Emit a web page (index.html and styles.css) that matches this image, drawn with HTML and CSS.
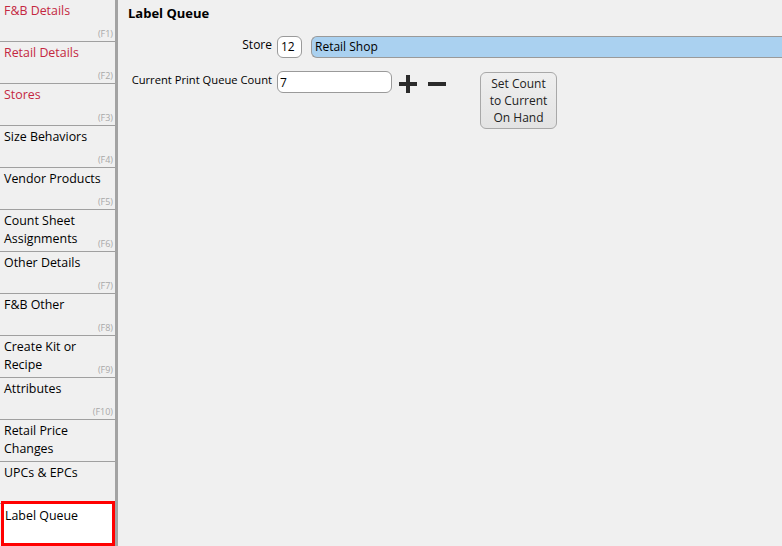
FILE: index.html
```html
<!DOCTYPE html>
<html>
<head>
    <title>Label Queue</title>
    <meta charset="UTF-8">
    <link rel="stylesheet" href="styles.css">
</head>
<body>
    <div class="app">
        <nav class="sidebar">
            <div class="nav-item red">F&amp;B Details<span class="fkey">(F1)</span></div>
            <div class="nav-item red">Retail Details<span class="fkey">(F2)</span></div>
            <div class="nav-item red">Stores<span class="fkey">(F3)</span></div>
            <div class="nav-item">Size Behaviors<span class="fkey">(F4)</span></div>
            <div class="nav-item">Vendor Products<span class="fkey">(F5)</span></div>
            <div class="nav-item">Count Sheet<br>Assignments<span class="fkey">(F6)</span></div>
            <div class="nav-item">Other Details<span class="fkey">(F7)</span></div>
            <div class="nav-item">F&amp;B Other<span class="fkey">(F8)</span></div>
            <div class="nav-item">Create Kit or<br>Recipe<span class="fkey">(F9)</span></div>
            <div class="nav-item">Attributes<span class="fkey">(F10)</span></div>
            <div class="nav-item">Retail Price<br>Changes</div>
            <div class="nav-item">UPCs &amp; EPCs</div>
            <div class="nav-item active">Label Queue</div>
        </nav>

        <main class="content">
            <h1>Label Queue</h1>

            <div class="row store-row">
                <label class="field-label">Store</label>
                <div class="box store-num">12</div>
                <div class="box store-name">Retail Shop</div>
            </div>

            <div class="row count-row">
                <label class="field-label small">Current Print Queue Count</label>
                <input class="box count-input" type="text" value="7">
                <span class="icon-btn">
                    <svg width="18" height="18" viewBox="0 0 18 18"><rect x="7" y="0" width="4" height="18" fill="#2b2b2b"/><rect x="0" y="7" width="18" height="4" fill="#2b2b2b"/></svg>
                </span>
                <span class="icon-btn">
                    <svg width="18" height="18" viewBox="0 0 18 18"><rect x="0" y="7" width="18" height="4" fill="#2b2b2b"/></svg>
                </span>
                <button class="set-btn">Set Count<br>to Current<br>On Hand</button>
            </div>
        </main>
    </div>
</body>
</html>
```

FILE: styles.css
```css
html, body {
    margin: 0;
    padding: 0;
    background: #f0f0f0;
    height: 100%;
}

body {
    font-family: "Open Sans", "Noto Sans", sans-serif;
    font-size: 12px;
    color: #000;
    overflow: hidden;
}

.app {
    display: flex;
    height: 546px;
}

.sidebar {
    width: 115px;
    border-right: 3px solid #a3a3a3;
    display: flex;
    flex-direction: column;
    flex-shrink: 0;
    overflow: hidden;
}

.nav-item {
    position: relative;
    flex-shrink: 0;
    border-bottom: 1px solid #a0a0a0;
    padding: 2px 0 0 4px;
    font-size: 12.4px;
    line-height: 18px;
    box-sizing: border-box;
    height: 42px;
}

.nav-item.red {
    color: #c4283f;
}

.fkey {
    position: absolute;
    right: 2px;
    bottom: 1px;
    font-size: 9px;
    line-height: 12px;
    color: #a8a8a8;
}

.nav-item.active {
    background: #fff;
    border: 3px solid #ff0000;
    margin: -3px 0 0 1px;
    padding: 3px 0 0 1px;
    height: 45px;
}

.content {
    flex: 1;
    padding: 4px 0 0 10px;
}

h1 {
    font-size: 13px;
    font-weight: bold;
    margin: 0 0 14px 0;
    line-height: 18px;
}

.row {
    display: flex;
    align-items: flex-start;
}

.field-label {
    width: 144px;
    text-align: right;
    padding-right: 5px;
    line-height: 18px;
}

.field-label.small {
    font-size: 11.2px;
}

.box {
    height: 22px;
    box-sizing: border-box;
    border: 1px solid #9a9a9a;
    border-radius: 6px;
    background: #fff;
    font-family: inherit;
    font-size: 12px;
    padding: 1px 2px 0 2px;
    line-height: 18px;
}

.store-row {
    margin-bottom: 13px;
}

.store-num {
    width: 25px;
    padding-left: 3px;
}

.store-name {
    flex: 1;
    margin-left: 9px;
    background: #aad1f0;
    border-radius: 6px 0 0 6px;
    border-right: none;
    padding-left: 3px;
}

.count-input {
    width: 115px;
    outline: none;
    color: #000;
}

.icon-btn {
    margin: 4px 0 0 7px;
    display: inline-block;
    height: 18px;
}

.icon-btn + .icon-btn {
    margin-left: 11px;
}

.set-btn {
    margin-left: 34px;
    margin-top: 1px;
    width: 77px;
    height: 57px;
    border: 1px solid #a8a8a8;
    border-radius: 6px;
    background: linear-gradient(#efefef, #e3e3e3);
    font-family: inherit;
    font-size: 12px;
    line-height: 17px;
    color: #222;
    padding: 0;
}
```
